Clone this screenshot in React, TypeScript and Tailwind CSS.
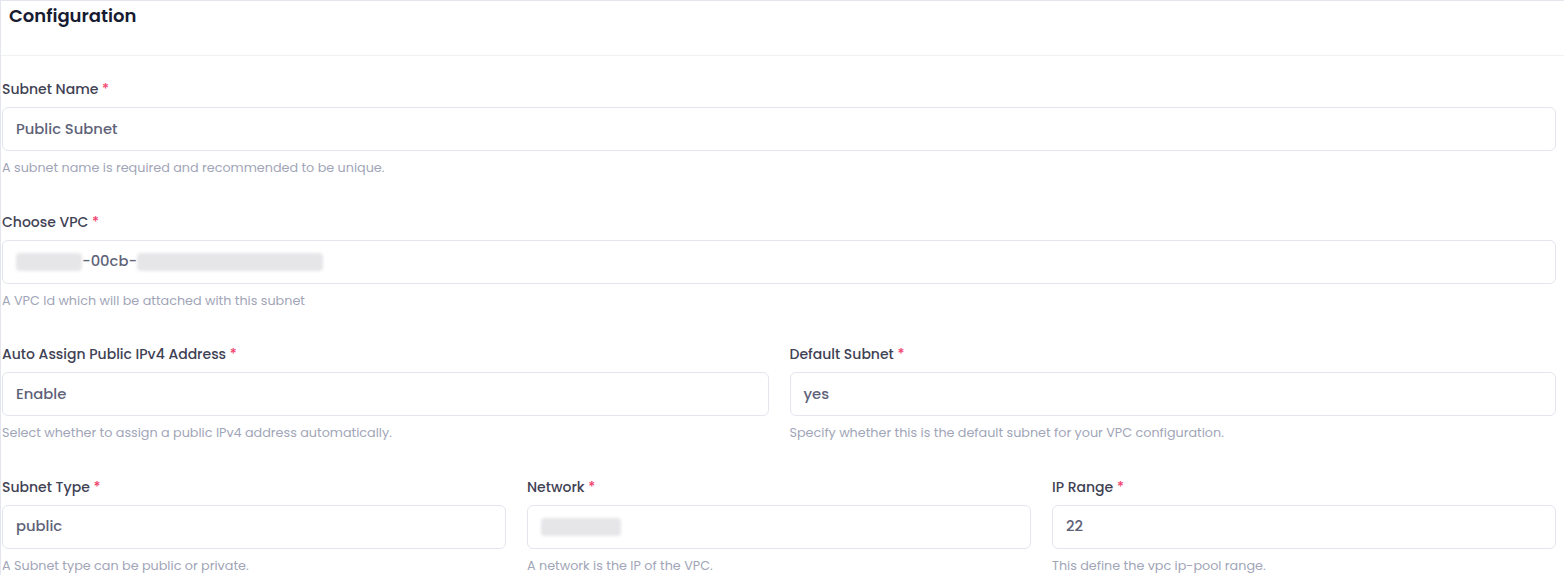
import React from "react";

type FieldProps = {
  label: string;
  help: string;
  children: React.ReactNode;
};

const Field = ({ label, help, children }: FieldProps) => {
  return (
    <div className="flex flex-col">
      <label className="h-5 text-[14px] leading-5 font-medium text-[#3f4254]">
        {label} <span className="text-[#f1416c]">*</span>
      </label>
      <div className="mt-[8px] h-[44px] rounded-md border border-[#e4e6ef] bg-white px-[13px] flex items-center text-[14.75px] font-medium text-[#5e6278]">
        {children}
      </div>
      <p className="mt-[8px] h-[18px] text-[12.75px] leading-[18px] text-[#a1a5b7]">
        {help}
      </p>
    </div>
  );
};

const Blur = ({ w }: { w: number }) => (
  <span
    className="inline-block h-[18px] rounded-sm bg-[#e6e6e9] blur-[1.5px]"
    style={{ width: w }}
  />
);

const App = () => {
  return (
    <div
      className="min-h-screen bg-white"
      style={{ fontFamily: "Poppins, 'DejaVu Sans', sans-serif" }}
    >
      <div className="border-l border-t border-[#e4e6ef]">
        <div className="h-[55px] border-b border-[#eff2f5] px-2 pt-[2px]">
          <h3 className="text-[18px] leading-[26px] font-semibold text-[#181c32]">
            Configuration
          </h3>
        </div>

        <div className="pl-[1px] pr-2 pt-[23px] flex flex-col gap-y-[34.5px]">
          <Field
            label="Subnet Name"
            help="A subnet name is required and recommended to be unique."
          >
            Public Subnet
          </Field>

          <Field
            label="Choose VPC"
            help="A VPC Id which will be attached with this subnet"
          >
            <Blur w={66} />
            <span>-00cb-</span>
            <Blur w={186} />
          </Field>

          <div className="grid grid-cols-2 gap-x-[21px]">
            <Field
              label="Auto Assign Public IPv4 Address"
              help="Select whether to assign a public IPv4 address automatically."
            >
              Enable
            </Field>
            <Field
              label="Default Subnet"
              help="Specify whether this is the default subnet for your VPC configuration."
            >
              yes
            </Field>
          </div>

          <div className="grid grid-cols-3 gap-x-[21px]">
            <Field
              label="Subnet Type"
              help="A Subnet type can be public or private."
            >
              public
            </Field>
            <Field label="Network" help="A network is the IP of the VPC.">
              <Blur w={80} />
            </Field>
            <Field label="IP Range" help="This define the vpc ip-pool range.">
              22
            </Field>
          </div>
        </div>
      </div>
    </div>
  );
};

export default App;
